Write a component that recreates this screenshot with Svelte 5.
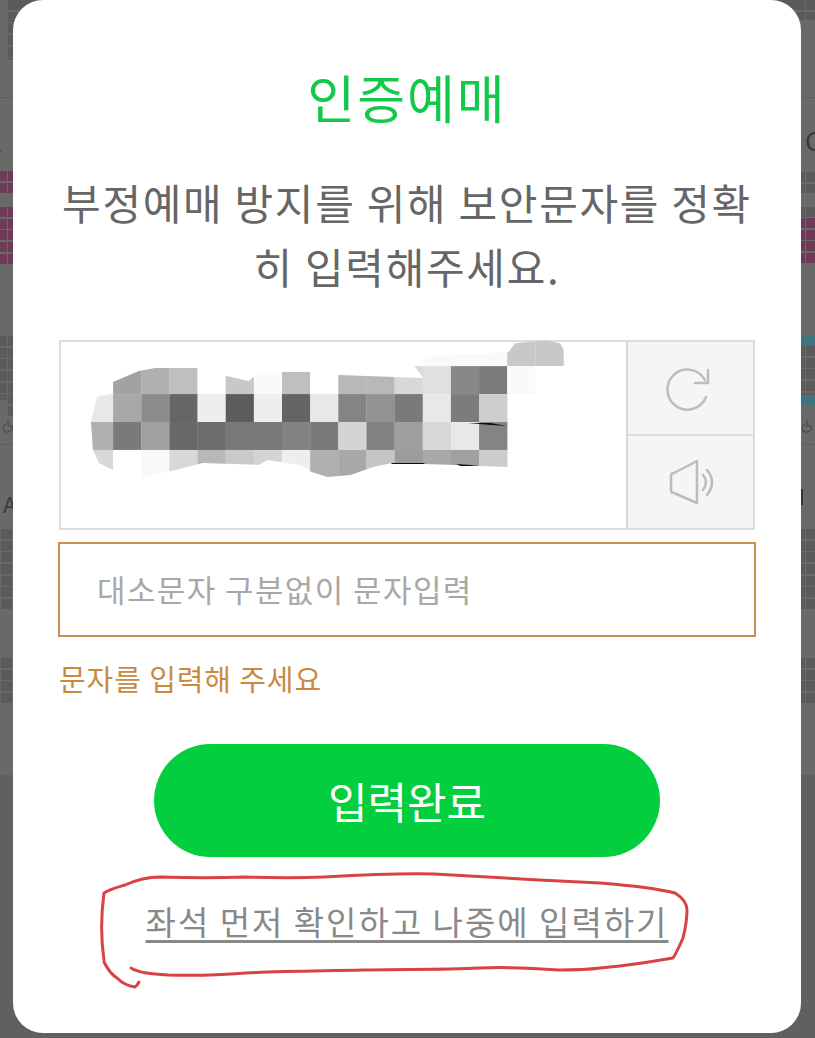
<script lang="ts">
  // dimmed seat map behind the dialog: [x, y, w, h, colour]
  const dark = '#5b5b5b';
  const pink = '#6e3a55';
  const teal = '#3d7480';
  const blocks = [
    [8, 0, 60, 60, dark],
    [0, 171, 7, 22, pink], [8, 171, 5, 22, pink],
    [0, 207, 7, 57, pink], [8, 207, 5, 57, pink],
    [0, 336, 7, 64, dark], [8, 336, 5, 80, dark],
    [1, 529, 11, 80, dark],
    [1, 658, 11, 45, dark],
    [770, 0, 31, 20, dark], [801, 0, 4, 20, dark], [806, 0, 9, 20, dark],
    [801, 172, 4, 21, dark], [806, 172, 9, 21, dark],
    [801, 207, 4, 11, dark], [806, 207, 9, 11, dark],
    [801, 218, 4, 46, pink], [806, 218, 9, 46, pink],
    [801, 336, 4, 10, teal], [806, 336, 9, 10, teal],
    [801, 346, 4, 49, dark], [806, 346, 9, 49, dark],
    [801, 395, 4, 10, teal], [806, 395, 9, 10, teal],
    [801, 529, 4, 80, dark], [806, 529, 9, 80, dark],
    [801, 658, 4, 45, dark], [806, 658, 9, 45, dark]
  ];

  // blurred captcha, grey value per 28px cell, first column at x=84
  const mosaic = [
    { y: 340, h: 26, cells: [0, 0, 0, 0, 0, 0, 0, 0, 0, 0, 0, 0, 0xf9, 0xf9, 0xf9, 0xc8, 0xc8] },
    { y: 366, h: 28, cells: [0, 0xa2, 0xb0, 0xbf, 0xff, 0xc8, 0xfa, 0xbf, 0xff, 0xb8, 0xb8, 0xd8, 0xe0, 0x88, 0x7c, 0xfa] },
    { y: 394, h: 28, cells: [0xe8, 0xa8, 0x8c, 0x66, 0xee, 0x5c, 0xee, 0x64, 0xe8, 0x84, 0x92, 0x7a, 0xe8, 0x7c, 0xce] },
    { y: 422, h: 28, cells: [0xb0, 0x7a, 0xa0, 0x68, 0x6c, 0x78, 0x78, 0x82, 0x7a, 0xd4, 0x82, 0x9e, 0xd8, 0xe8, 0x84] },
    { y: 450, h: 28, cells: [0xd8, 0xff, 0xf8, 0xd8, 0xb8, 0xca, 0xd4, 0xee, 0xb0, 0xa8, 0xc4, 0x9c, 0xa8, 0xa0, 0xcc] }
  ];
  const grey = (v: number) => `rgb(${v},${v},${v})`;
</script>

<div class="page">
  <div class="seatmap" aria-hidden="true">
    <div class="tone"></div>
    <div class="rule" style="top:97px"></div>
    <div class="rule" style="top:444px"></div>
    {#each blocks as [x, y, w, h, c]}
      <div class="seats" style="left:{x}px;top:{y}px;width:{w}px;height:{h}px;background-color:{c}"></div>
    {/each}
    <span class="mark left">A</span>
    <span class="mark left2">A</span>
    <span class="mark right">C</span>
    <div class="tick"></div>
    <svg class="chair" style="left:3px;top:419px" width="11" height="14" viewBox="0 0 11 14" fill="none">
      <path d="M5 1 V7 H9 L10 11 M3 5 A4.2 4.2 0 1 0 8 11" />
    </svg>
    <svg class="chair" style="left:802px;top:419px" width="11" height="14" viewBox="0 0 11 14" fill="none">
      <path d="M5 1 V7 H9 L10 11 M3 5 A4.2 4.2 0 1 0 8 11" />
    </svg>
  </div>

  <div class="modal">
    <h1>인증예매</h1>
    <p class="desc">부정예매 방지를 위해 보안문자를 정확히 입력해주세요.</p>

    <div class="captcha">
      <div class="captcha-img">
        <svg viewBox="60 342 566 186" aria-hidden="true">
          <defs>
            <clipPath id="blob">
              <path d="M112 382 L138 371 L154 368 L198 368 L226 376 L248 381 L254 376 L265 372 L308 372 L338 375 L423 378 L412 363 L430 356 L508 352 L515 343 L545 340 L560 343 L564 350 L564 366 L536 366 L536 394 L508 394 L508 467 L479 466 L456 465 L391 463 L373 467 L350 475 L327 477 L311 472 L299 465 L267 460 L258 465 L202 463 L175 470 L142 477 L141 470 L112 470 L98 463 L92 450 L90 422 L96 397 L112 393 Z" />
            </clipPath>
          </defs>
          <g clip-path="url(#blob)">
            {#each mosaic as row}
              {#each row.cells as v, i}
                {#if v}
                  <rect x={84 + i * 28.2} y={row.y} width="28.4" height={row.h} fill={grey(v)} />
                {/if}
              {/each}
            {/each}
          </g>
          <path class="ink" d="M468 423 L490 423 L507 426 L490 425 Z" />
          <path class="ink" d="M391 463 L424 463 L424 464 L391 464 Z" />
          <path class="ink" d="M456 464 L470 465 L479 466 L460 466 Z" />
        </svg>
      </div>
      <div class="captcha-btns">
        <button type="button" aria-label="새로고침">
          <svg width="46" height="46" viewBox="0 0 46 46" fill="none">
            <path d="M37 15 A20 20 0 1 0 38 32" />
            <path d="M40 5 V18 H27" />
          </svg>
        </button>
        <button type="button" aria-label="음성듣기">
          <svg width="48" height="44" viewBox="0 0 48 44" fill="none">
            <path d="M7 13 Q4 13 4 16 V30 Q4 33 7 33 L30 43 V1 Z" stroke-linejoin="round" />
            <path d="M36 15 Q42 22 36 30" />
            <path d="M40 10 Q50 22 40 35" />
          </svg>
        </button>
      </div>
    </div>

    <input class="code" type="text" placeholder="대소문자 구분없이 문자입력" />
    <p class="error">문자를 입력해 주세요</p>

    <button class="submit" type="button">입력완료</button>
    <a class="later" href="#later">좌석 먼저 확인하고 나중에 입력하기</a>
  </div>

  <!-- hand-drawn annotation on top of the screenshot -->
  <svg class="scribble" viewBox="0 0 815 1038" fill="none" aria-hidden="true">
    <path d="M104 960 C101 940 101 915 104 893 C110 889 118 887 125 885 C136 880 148 877 160 877 C190 878 220 878 246 877 C275 878 300 878 324 877 C360 875 400 873 434 874 C470 876 505 878 539 880 C560 881 580 882 600 883 C625 885 655 888 675 893 C683 898 687 904 687 910 C687 922 685 930 683 938 C680 945 677 952 673 958 C650 962 625 966 600 968 C585 970 572 970 559 970 C533 968 507 967 480 968 C440 970 400 969 363 970 C325 971 285 971 246 973 C220 975 195 976 168 975 C152 974 139 973 131 968" />
    <path d="M104 962 C108 970 112 975 117 978 C122 983 128 986 135 987 C137 986 138 984 139 982" />
  </svg>
</div>

<style>
  :global(body) {
    margin: 0;
    background: #606060;
  }

  .page {
    position: relative;
    width: 815px;
    height: 1038px;
    overflow: hidden;
    font-family: "Noto Sans CJK KR", "Noto Sans", sans-serif;
  }

  .seatmap {
    position: absolute;
    inset: 0;
    background: #606060;
  }

  .tone {
    height: 775px;
    background: #696969;
  }

  .rule {
    position: absolute;
    left: 0;
    right: 0;
    height: 1px;
    background: #5e5e5e;
  }

  .seats {
    position: absolute;
    background-image: repeating-linear-gradient(to bottom, transparent 0 10px, #696969 10px 11.7px);
  }

  .mark {
    position: absolute;
    font-size: 26px;
    line-height: 30px;
    color: #3a3a3a;
  }

  .mark.left {
    left: -15px;
    top: 126px;
  }

  .mark.left2 {
    left: 3px;
    top: 488px;
    font-size: 22px;
  }

  .mark.right {
    left: 805px;
    top: 125px;
  }

  .tick {
    position: absolute;
    left: 801px;
    top: 489px;
    width: 2px;
    height: 16px;
    background: #333;
  }

  .chair {
    position: absolute;
  }

  .chair path {
    stroke: #4a4a4a;
    stroke-width: 1.2;
  }

  .modal {
    position: relative;
    box-sizing: border-box;
    width: 788px;
    height: 1033px;
    margin-left: 13px;
    padding: 67px 45px 0;
    background: #fff;
    border-radius: 30px;
    display: flex;
    flex-direction: column;
  }

  h1 {
    margin: 0;
    font-size: 52px;
    line-height: 60px;
    font-weight: 400;
    letter-spacing: 2px;
    text-align: center;
    color: #12c94a;
  }

  .desc {
    margin: 43px 0 0;
    font-size: 42px;
    line-height: 64px;
    letter-spacing: 1.7px;
    text-align: center;
    color: #666;
    word-break: break-all;
  }

  .captcha {
    box-sizing: border-box;
    display: flex;
    height: 190px;
    margin: 42px 1px 0;
    border: 2px solid #ddd;
  }

  .captcha-img {
    flex: 1;
    border-right: 2px solid #d8d8d8;
  }

  .captcha-img svg {
    display: block;
    width: 100%;
    height: 100%;
    overflow: visible;
  }

  .ink {
    fill: #111;
  }

  .captcha-btns {
    width: 125px;
    display: flex;
    flex-direction: column;
    background: #f5f5f5;
  }

  .captcha-btns button {
    flex: 1;
    display: flex;
    align-items: center;
    justify-content: center;
    padding: 0;
    border: 0;
    background: none;
  }

  .captcha-btns button + button {
    border-top: 2px solid #ddd;
  }

  .captcha-btns svg {
    overflow: visible;
  }

  .captcha-btns path {
    stroke: #bcbcbc;
    stroke-width: 2.5;
    stroke-linecap: round;
  }

  .code {
    box-sizing: border-box;
    height: 95px;
    margin-top: 12px;
    padding: 0 37px 3px;
    border: 2px solid #c8924e;
    border-radius: 0;
    background: #fff;
    font-family: inherit;
    font-size: 31px;
    letter-spacing: 1.4px;
    outline: none;
  }

  .code::placeholder {
    color: #a8a8a8;
    opacity: 1;
  }

  .error {
    margin: 21px 0 0 1px;
    font-size: 29px;
    line-height: 40px;
    letter-spacing: 0.9px;
    color: #c98a3e;
  }

  .submit {
    align-self: center;
    width: 506px;
    height: 113px;
    margin-top: 46px;
    padding-bottom: 3px;
    border: 0;
    border-radius: 57px;
    background: #03cf3e;
    color: #fff;
    font-family: inherit;
    font-size: 43px;
  }

  .later {
    align-self: center;
    margin-top: 44px;
    font-size: 33px;
    line-height: 40px;
    letter-spacing: 2px;
    color: #888;
    text-decoration: underline;
    text-underline-offset: 5px;
  }

  .scribble {
    position: absolute;
    inset: 0;
    width: 815px;
    height: 1038px;
    pointer-events: none;
  }

  .scribble path {
    stroke: #d94242;
    stroke-width: 3;
    stroke-linecap: round;
    stroke-linejoin: round;
  }
</style>
